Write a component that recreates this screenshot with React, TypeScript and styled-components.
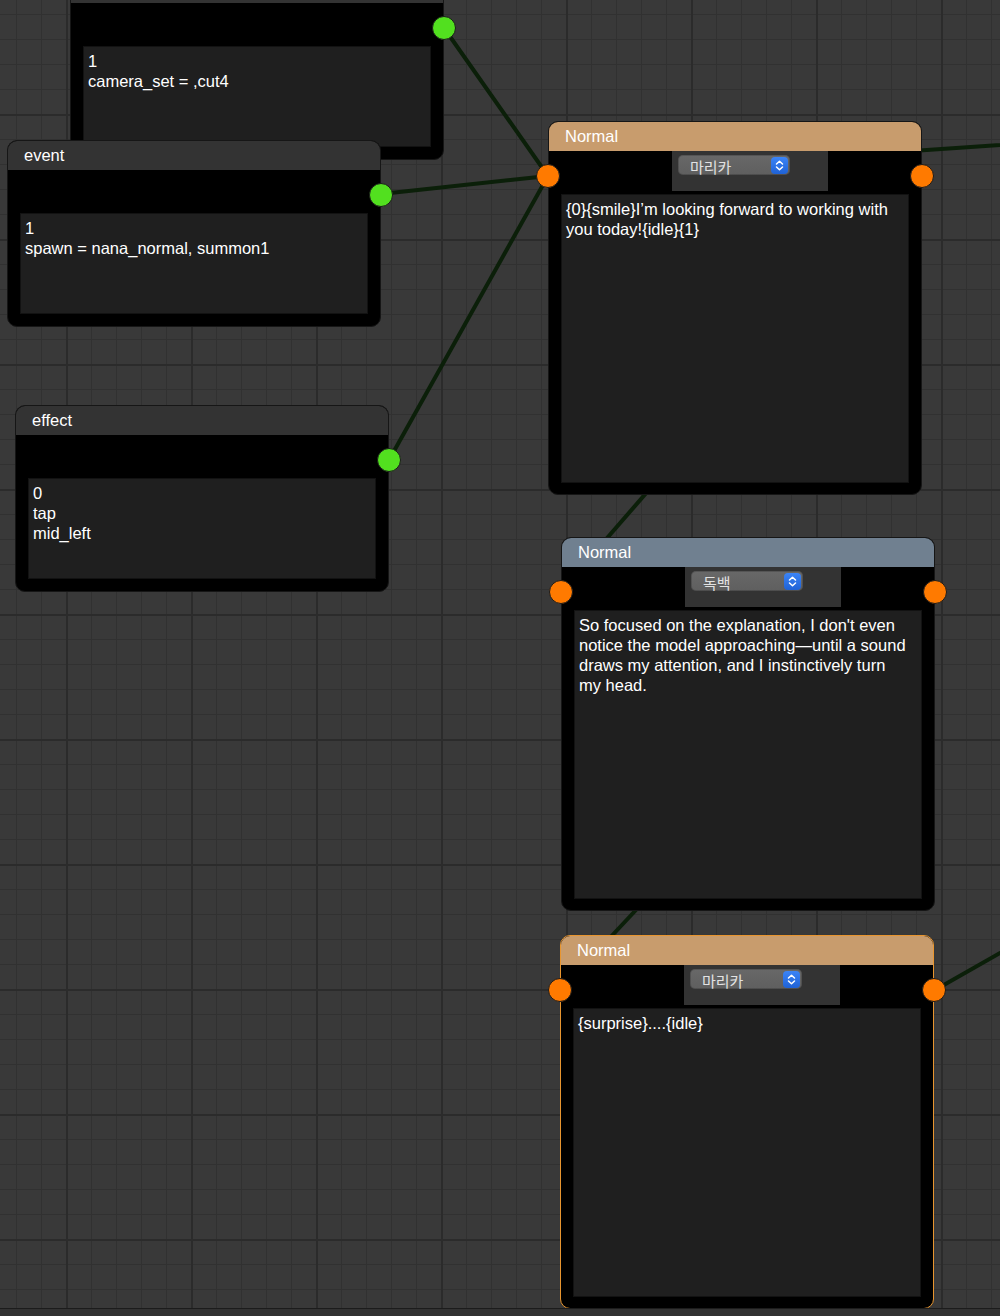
import React from 'react';
import styled, { createGlobalStyle } from 'styled-components';

const GlobalStyle = createGlobalStyle`
  html, body { margin: 0; padding: 0; background: #323232; }
  body { font-family: "Liberation Sans", Arial, sans-serif; }
  * { box-sizing: border-box; }
`;

const Canvas = styled.div`
  position: relative;
  width: 1000px;
  height: 1309px;
  overflow: hidden;
  border-bottom: 1px solid #1c1c1c;
  background-color: #393939;
  background-image:
    linear-gradient(to bottom, #2b2b2b 2px, transparent 2px),
    linear-gradient(to right, #2b2b2b 2px, transparent 2px),
    linear-gradient(to bottom, #313131 1px, transparent 1px),
    linear-gradient(to right, #313131 1px, transparent 1px);
  background-size: 125px 125px, 125px 125px, 25px 25px, 25px 25px;
  background-position: 0 114px, 66px 0, 0 14px, 16px 0;
`;

const Wires = styled.svg`
  position: absolute;
  left: 0;
  top: 0;
  pointer-events: none;
`;

const NodeBox = styled.div<{ $selected?: boolean }>`
  position: absolute;
  width: 374px;
  display: flex;
  flex-direction: column;
  background: #000;
  border-radius: 10px;
  border: 1px solid ${(p) => (p.$selected ? '#e8952f' : '#161616')};
`;

const Header = styled.div<{ $tone: string }>`
  height: 29px;
  padding-left: 16px;
  display: flex;
  align-items: center;
  background: ${(p) => p.$tone};
  border-radius: 9px 9px 0 0;
  color: #ffffff;
  font-size: 16.5px;
  white-space: nowrap;
`;

const Body = styled.div<{ $bottom: number }>`
  display: flex;
  flex-direction: column;
  padding: 0 12px ${(p) => p.$bottom}px;
`;

const PortRow = styled.div`
  height: 40px;
  margin-bottom: 3px;
  display: flex;
`;

const ControlBox = styled.div`
  margin-left: 111px;
  width: 156px;
  height: 40px;
  background: #333333;
  padding: 4px 0 0 6px;
`;

const SelectBox = styled.div`
  width: 112px;
  height: 20px;
  border-radius: 5px;
  background: linear-gradient(#686868, #5f5f5f);
  box-shadow: inset 0 0 0 1px rgba(0, 0, 0, 0.18);
  display: flex;
  align-items: center;
  justify-content: space-between;
  padding: 0 2px 0 12px;
  color: #e2e2e2;
  font-family: "Noto Sans CJK KR", "Liberation Sans", sans-serif;
  font-size: 15px;
`;

const SelectLabel = styled.span`
  display: block;
  line-height: 20px;
  padding-top: 3px;
`;

const Stepper = styled.span`
  width: 17px;
  height: 17px;
  border-radius: 4px;
  background: linear-gradient(#3b84f6, #1f62d6);
  display: flex;
  align-items: center;
  justify-content: center;
`;

const TextArea = styled.textarea<{ $h: number }>`
  display: block;
  width: 100%;
  height: ${(p) => p.$h}px;
  margin: 0;
  padding: 4px 12px 0 4px;
  border: 1px solid #121212;
  background: #1f1f1f;
  color: #ffffff;
  font-family: "Liberation Sans", Arial, sans-serif;
  font-size: 16.5px;
  line-height: 20px;
  resize: none;
  outline: none;
  overflow: hidden;
`;

const Port = styled.span<{ $side: 'left' | 'right'; $color: string }>`
  position: absolute;
  top: 42px;
  ${(p) => (p.$side === 'left' ? 'left: -13px;' : 'right: -13px;')}
  width: 24px;
  height: 24px;
  border-radius: 50%;
  background: ${(p) => p.$color};
  border: 1px solid #1b1b1b;
`;

const GREEN = '#52e01f';
const ORANGE = '#ff7a00';

const TONES = {
  plain: '#333333',
  speaker: '#c89c6d',
  narration: '#708090',
};

type NodeData = {
  x: number;
  y: number;
  kind: keyof typeof TONES;
  title: string;
  speaker?: string;
  text: string;
  selected?: boolean;
};

const nodes: NodeData[] = [
  { x: 70, y: -27, kind: 'plain', title: '', text: '1\ncamera_set = ,cut4' },
  { x: 7, y: 140, kind: 'plain', title: 'event', text: '1\nspawn = nana_normal, summon1' },
  { x: 15, y: 405, kind: 'plain', title: 'effect', text: '0\ntap\nmid_left' },
  {
    x: 548,
    y: 121,
    kind: 'speaker',
    title: 'Normal',
    speaker: '마리카',
    text: '{0}{smile}I\u2019m looking forward to working with you today!{idle}{1}',
  },
  {
    x: 561,
    y: 537,
    kind: 'narration',
    title: 'Normal',
    speaker: '독백',
    text:
      "So focused on the explanation, I don't even notice the model approaching\u2014until a sound draws my attention, and I instinctively turn my head.",
  },
  {
    x: 560,
    y: 935,
    kind: 'speaker',
    title: 'Normal',
    speaker: '마리카',
    text: '{surprise}....{idle}',
    selected: true,
  },
];

const wires: [number, number, number, number][] = [
  [444, 28, 548, 176],
  [381, 194, 548, 176],
  [389, 460, 548, 176],
  [548, 176, 1100, 138],
  [922, 176, 561, 591],
  [935, 591, 561, 990],
  [935, 990, 1100, 896],
];

const StepperIcon = () => (
  <svg width="11" height="13" viewBox="0 0 11 13" fill="none">
    <path d="M2.5 5 L5.5 2.2 L8.5 5" stroke="#fff" strokeWidth="1.5" strokeLinecap="round" strokeLinejoin="round" />
    <path d="M2.5 8 L5.5 10.8 L8.5 8" stroke="#fff" strokeWidth="1.5" strokeLinecap="round" strokeLinejoin="round" />
  </svg>
);

const GraphNode: React.FC<{ node: NodeData }> = ({ node }) => {
  const isSpeaker = node.kind !== 'plain';
  return (
    <NodeBox $selected={node.selected} style={{ left: node.x, top: node.y }}>
      <Header $tone={TONES[node.kind]}>{node.title}</Header>
      <Body $bottom={isSpeaker ? 11 : 12}>
        <PortRow>
          {node.speaker && (
            <ControlBox>
              <SelectBox>
                <SelectLabel>{node.speaker}</SelectLabel>
                <Stepper>
                  <StepperIcon />
                </Stepper>
              </SelectBox>
            </ControlBox>
          )}
        </PortRow>
        <TextArea $h={isSpeaker ? 289 : 101} readOnly defaultValue={node.text} />
      </Body>
      {isSpeaker && <Port $side="left" $color={ORANGE} />}
      <Port $side="right" $color={isSpeaker ? ORANGE : GREEN} />
    </NodeBox>
  );
};

export default function App() {
  return (
    <>
      <GlobalStyle />
      <Canvas>
        <Wires width={1000} height={1308} viewBox="0 0 1000 1308">
          {wires.map(([x1, y1, x2, y2], i) => (
            <line key={i} x1={x1} y1={y1} x2={x2} y2={y2} stroke="#0b1f09" strokeWidth={4} strokeLinecap="round" />
          ))}
        </Wires>
        {nodes.map((n, i) => (
          <GraphNode key={i} node={n} />
        ))}
      </Canvas>
    </>
  );
}
